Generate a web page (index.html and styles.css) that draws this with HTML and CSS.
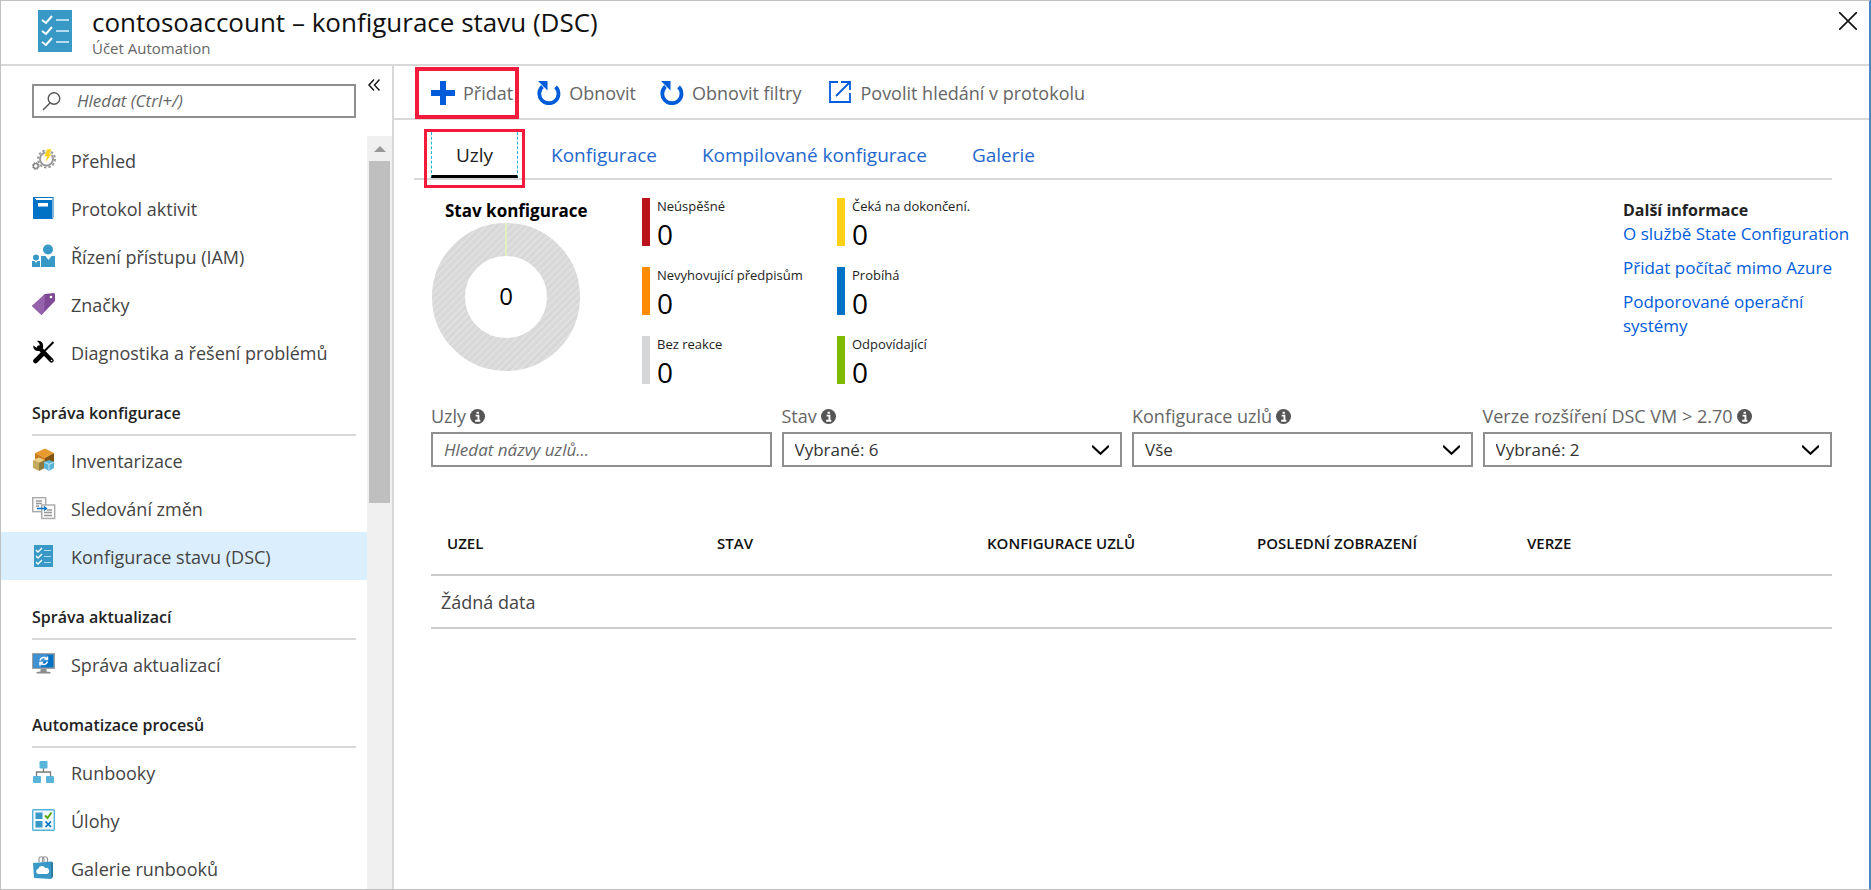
FILE: index.html
```html
<!DOCTYPE html>
<html lang="cs">
<head>
<meta charset="utf-8">
<title>contosoaccount – konfigurace stavu (DSC)</title>
<link rel="stylesheet" href="styles.css">
</head>
<body>
<div class="blade">
  <header class="header">
    <svg class="header-icon" viewBox="0 0 34 42" aria-hidden="true"><rect width="34" height="42" fill="#3999c6"/><g fill="none" stroke="#fff" stroke-width="2"><path d="M4 10l4 3 6-7M4 21l4 3 6-7M4 32l4 3 6-7"/></g><path stroke="#b5dcee" stroke-width="2" d="M18 10h13M18 21h13M18 32h13"/></svg>
    <div class="header-text">
      <h1 class="title">contosoaccount – konfigurace stavu (DSC)</h1>
      <p class="subtitle">Účet Automation</p>
    </div>
    <button class="close" aria-label="Zavřít"><svg width="18" height="18" viewBox="0 0 18 18"><path d="M0 0L18 18M18 0L0 18" stroke="#111" stroke-width="1.6"/></svg></button>
  </header>
  <div class="body">
    <aside class="sidebar">
      <div class="search-row">
        <div class="search">
          <svg width="20" height="20" viewBox="0 0 20 20" aria-hidden="true"><g fill="none" stroke="#555" stroke-width="1.4"><circle cx="12" cy="7.500" r="5.800"/><path d="M8 12L1 19"/></g></svg>
          <input class="search-input" type="text" placeholder="Hledat (Ctrl+/)" aria-label="Hledat">
        </div>
        <button class="collapse" aria-label="Sbalit nabídku"><svg width="12" height="12" viewBox="0 0 12 12"><path d="M6 .5L1 6l5 5.500M11.500 .5L6.500 6l5 5.500" fill="none" stroke="#111" stroke-width="1.4"/></svg></button>
      </div>
      <div class="nav-wrap">
        <nav class="nav">
          <a class="nav-item" href="#"><svg viewBox="0 0 24 24" aria-hidden="true"><circle cx="14.500" cy="11" r="6.500" fill="none" stroke="#9a9a9a" stroke-width="2"/><circle cx="14.500" cy="11" r="8.500" fill="none" stroke="#9a9a9a" stroke-width="2" stroke-dasharray="2.400 2.050"/><circle cx="3.800" cy="18" r="2.400" fill="none" stroke="#888" stroke-width="1.500"/><circle cx="3.800" cy="18" r="3.500" fill="none" stroke="#888" stroke-dasharray="1.400 1.350"/><path d="M15 1h5l-2.500 5H20l-7 9 1.800-6.500H12z" fill="#fcd116" stroke="#fff" stroke-width=".5"/></svg><span>Přehled</span></a>
          <a class="nav-item" href="#"><svg viewBox="0 0 24 24" aria-hidden="true"><path fill="#0072c6" d="M1 1h21v1H4v2h17v19H2a1 1 0 0 1-1-1z"/><path fill="#fff" d="M3 2h17v1H3z"/><path fill="#7fb2dc" d="M20 2l2-1v20l-2 2z"/><rect x="6" y="7" width="10" height="3.500" fill="#fff"/></svg><span>Protokol aktivit</span></a>
          <a class="nav-item" href="#"><svg viewBox="0 0 24 24" aria-hidden="true"><g fill="#3999c6"><circle cx="16" cy="5.500" r="5"/><path d="M9 12h4.500l3 4 3-4H23v11H9z"/><circle cx="4" cy="13.500" r="3"/><path d="M0 17h2.500L4 19l1.500-2H8v6H0z"/></g></svg><span>Řízení přístupu (IAM)</span></a>
          <a class="nav-item" href="#"><svg viewBox="0 0 24 24" aria-hidden="true"><path fill="#804998" d="M0 14L13 2l9-1 1 1v7L9.500 23z"/><path fill="#9463ab" d="M0 14L13 2l-1 18.500L9.500 23z"/><circle cx="19" cy="5" r="1.800" fill="#fff" stroke="#5a2d70" stroke-width=".6"/></svg><span>Značky</span></a>
          <a class="nav-item" href="#"><svg viewBox="0 0 24 24" aria-hidden="true"><path d="M21.500 2L11 12.500" stroke="#000" stroke-width="2"/><path d="M3.500 21L11 13.500" stroke="#000" stroke-width="4.600" stroke-linecap="round"/><path d="M7 7.500L19.500 20.500" stroke="#000" stroke-width="4.400" stroke-linecap="round"/><path d="M5 1c4-1 7 2 6 7L7 11C3 11.500 1 8.500 1.300 5.500L5 8l3-2.500L7 3z"/><circle cx="19.500" cy="20.500" r=".8" fill="#fff"/></svg><span>Diagnostika a řešení problémů</span></a>

          <h2 class="nav-section">Správa konfigurace</h2>
          <a class="nav-item" href="#"><svg viewBox="0 0 24 24" aria-hidden="true"><path fill="#e79b2f" d="M3 5l10-4.500L22 5l-9 5z"/><path fill="#c87a14" d="M3 5l10 5v9L3 14z"/><path fill="#84540d" d="M22 5v10l-9 4v-9z"/><path fill="#e8d088" d="M1 12l6-2.500 6 2.500-6 3z"/><path fill="#c5aa5e" d="M1 12l6 3v8l-6-3z"/><path fill="#8e7b42" d="M13 12v8l-6 3v-8z"/><path fill="#59b4d9" d="M12 14l5-2 5 2v6l-5 3-5-3z"/><path fill="none" stroke="#d4eef8" stroke-width=".9" d="M12.500 14.300l4.500 2 4.500-2M17 16.300v6"/></svg><span>Inventarizace</span></a>
          <a class="nav-item" href="#"><svg viewBox="0 0 24 24" aria-hidden="true"><g fill="#fafafa" stroke="#aaa" stroke-width="1.400"><rect x=".7" y="1.700" width="13" height="14"/><rect x="9.700" y="9" width="13" height="13.500"/></g><path stroke="#999" stroke-width="1.300" d="M4 5h6M4 7.500h6M4 10h3M15 14h5M12 16.500h8M12 19.500h8"/><path d="M5 12.500h9M12 10.500l2.500 2-2.500 2" fill="none" stroke="#0072c6" stroke-width="1.300"/></svg><span>Sledování změn</span></a>
          <a class="nav-item nav-item-active" href="#" aria-current="page"><svg viewBox="0 0 24 24" aria-hidden="true"><rect x="2" y="1" width="19" height="22" fill="#3999c6"/><path fill="none" stroke="#fff" stroke-width="1.300" d="M4 6l2 2 4-4M4 12l2 2 4-4M4 18l2 2 4-4"/><path stroke="#b5dcee" stroke-width="1.200" d="M12 6.500h7M12 12.500h7M12 18.500h7"/></svg><span>Konfigurace stavu (DSC)</span></a>

          <h2 class="nav-section">Správa aktualizací</h2>
          <a class="nav-item" href="#"><svg viewBox="0 0 24 24" aria-hidden="true"><rect y="1" width="23" height="16" fill="#a0a1a2"/><rect x="1.500" y="2.500" width="20" height="13" fill="#0072c6"/><path fill="#3f92d4" d="M1.500 2.500H16l-7 13H1.500z"/><path fill="#8a8b8c" d="M8.500 17h6v2.500l4 .5v1.500h-14V20l4-.5z"/><path fill="none" stroke="#fff" stroke-width="1.500" d="M8 8.500a4 4 0 0 1 7-1.500M15.500 4.500V7.500h-3M15.500 9.500a4 4 0 0 1-7 1.500M8 13.500v-3h3"/></svg><span>Správa aktualizací</span></a>

          <h2 class="nav-section">Automatizace procesů</h2>
          <a class="nav-item" href="#"><svg viewBox="0 0 24 24" aria-hidden="true"><path fill="none" stroke="#7a7a7a" stroke-width="1.300" d="M11.500 8v4M4.500 17v-5h14v5"/><g fill="#59b4d9"><rect x="7.500" y="1" width="8" height="7.500" rx="1"/><rect x="1" y="16" width="8" height="7" rx="1"/><rect x="14" y="16" width="8" height="7" rx="1"/></g></svg><span>Runbooky</span></a>
          <a class="nav-item" href="#"><svg viewBox="0 0 24 24" aria-hidden="true"><rect x=".7" y="1.700" width="21.600" height="20.600" rx="1" fill="#f0f9fd" stroke="#59b4d9" stroke-width="1.400"/><g fill="#3999c6"><rect x="3.500" y="4.500" width="7" height="6.500"/><rect x="3.500" y="13" width="7" height="6.500"/></g><path fill="none" stroke="#57a300" stroke-width="1.800" d="M13 7.500l2.500 2.500 4-5.500"/><path stroke="#0072c6" stroke-width="1.700" d="M13.500 13.500l5.500 5.500M19 13.500L13.500 19"/></svg><span>Úlohy</span></a>
          <a class="nav-item" href="#"><svg viewBox="0 0 24 24" aria-hidden="true"><path fill="none" stroke="#999" stroke-width="1.200" d="M7 6V3c0-3 5-3 5 0v3M10.500 6V3c0-3 5-3 5 0v3"/><path fill="#3999c6" d="M1 7l18-1.500v17.500L2 22z"/><path fill="#2b7ba3" d="M19 5.500l2 1V21l-2 2z"/><path fill="#fff" d="M6 18a2.700 2.700 0 0 1 .3-5.200 3.800 3.800 0 0 1 7-.8 3 3 0 0 1 1.500 6z"/></svg><span>Galerie runbooků</span></a>
        </nav>
        <div class="scrollbar" aria-hidden="true">
          <svg class="scroll-arrow" viewBox="0 0 12 6"><path d="M6 0l6 6H0z" fill="#999"/></svg>
          <div class="scroll-thumb"></div>
        </div>
      </div>
    </aside>

    <main class="main">
      <div class="toolbar">
        <button class="tool tool-marked"><svg viewBox="0 0 24 24" aria-hidden="true"><path d="M9 0h6v9h9v6h-9v9H9v-9H0V9h9z" fill="#015cda"/></svg>Přidat</button>
        <button class="tool"><svg viewBox="0 0 24 24" aria-hidden="true"><path d="M5.500 5.500A9.600 9.600 0 1 0 18.600 5.800" fill="none" stroke="#015cda" stroke-width="3.800"/><path d="M1 0h9.500v9.500z" fill="#015cda"/></svg>Obnovit</button>
        <button class="tool"><svg viewBox="0 0 24 24" aria-hidden="true"><path d="M5.500 5.500A9.600 9.600 0 1 0 18.600 5.800" fill="none" stroke="#015cda" stroke-width="3.800"/><path d="M1 0h9.500v9.500z" fill="#015cda"/></svg>Obnovit filtry</button>
        <button class="tool tool-log"><svg viewBox="0 0 24 24" aria-hidden="true"><path d="M10 1H2v20h20v-9M13 1h9v8M22 1L8 15" fill="none" stroke="#015cda" stroke-width="1.800"/></svg>Povolit hledání v protokolu</button>
      </div>

      <div class="content">
        <div class="tabs" role="tablist">
          <div class="tab-mark"><button class="tab tab-active" role="tab" aria-selected="true">Uzly</button></div>
          <button class="tab" role="tab">Konfigurace</button>
          <button class="tab" role="tab">Kompilované konfigurace</button>
          <button class="tab" role="tab">Galerie</button>
        </div>

        <section class="overview">
          <div class="chart">
            <h2 class="chart-title">Stav konfigurace</h2>
            <svg class="donut" viewBox="0 0 148 148" role="img" aria-label="Stav konfigurace: 0">
              <defs><pattern id="hatch" width="5" height="5" patternUnits="userSpaceOnUse" patternTransform="rotate(45)"><rect width="5" height="5" fill="#d8d8d8"/><rect width="1.300" height="5" fill="#e4e4e4"/></pattern></defs>
              <circle cx="74" cy="74" r="57.500" fill="none" stroke="url(#hatch)" stroke-width="33"/>
              <path d="M74 0v33" stroke="#e4efc4" stroke-width="2"/>
              <text class="donut-value" x="74" y="82" text-anchor="middle">0</text>
            </svg>
          </div>
          <dl class="stats">
            <div class="stat stat-red"><dt>Neúspěšné</dt><dd>0</dd></div>
            <div class="stat stat-yellow"><dt>Čeká na dokončení.</dt><dd>0</dd></div>
            <div class="stat stat-orange"><dt>Nevyhovující předpisům</dt><dd>0</dd></div>
            <div class="stat stat-blue"><dt>Probíhá</dt><dd>0</dd></div>
            <div class="stat stat-gray"><dt>Bez reakce</dt><dd>0</dd></div>
            <div class="stat stat-green"><dt>Odpovídající</dt><dd>0</dd></div>
          </dl>
          <div class="more">
            <h2 class="more-title">Další informace</h2>
            <a href="#">O službě State Configuration</a>
            <a href="#">Přidat počítač mimo Azure</a>
            <a href="#">Podporované operační systémy</a>
          </div>
        </section>

        <section class="filters">
          <div class="field">
            <div class="field-label"><label for="f-nodes">Uzly</label><svg class="info" viewBox="0 0 16 16" aria-hidden="true"><circle cx="8" cy="8" r="8"/><path d="M6 7h3v5M5.500 12.500h5.500M7 4h2.500" stroke="#fff" stroke-width="2" fill="none"/></svg></div>
            <input class="control" id="f-nodes" type="text" placeholder="Hledat názvy uzlů...">
          </div>
          <div class="field">
            <div class="field-label"><label for="f-state">Stav</label><svg class="info" viewBox="0 0 16 16" aria-hidden="true"><circle cx="8" cy="8" r="8"/><path d="M6 7h3v5M5.500 12.500h5.500M7 4h2.500" stroke="#fff" stroke-width="2" fill="none"/></svg></div>
            <div class="select-box"><select class="control" id="f-state"><option>Vybrané: 6</option></select><svg class="chevron" viewBox="0 0 16 9" aria-hidden="true"><path d="M0 .5l8 7.500 8-7.500"/></svg></div>
          </div>
          <div class="field">
            <div class="field-label"><label for="f-config">Konfigurace uzlů</label><svg class="info" viewBox="0 0 16 16" aria-hidden="true"><circle cx="8" cy="8" r="8"/><path d="M6 7h3v5M5.500 12.500h5.500M7 4h2.500" stroke="#fff" stroke-width="2" fill="none"/></svg></div>
            <div class="select-box"><select class="control" id="f-config"><option>Vše</option></select><svg class="chevron" viewBox="0 0 16 9" aria-hidden="true"><path d="M0 .5l8 7.500 8-7.500"/></svg></div>
          </div>
          <div class="field">
            <div class="field-label"><label for="f-version">Verze rozšíření DSC VM &gt; 2.70</label><svg class="info" viewBox="0 0 16 16" aria-hidden="true"><circle cx="8" cy="8" r="8"/><path d="M6 7h3v5M5.500 12.500h5.500M7 4h2.500" stroke="#fff" stroke-width="2" fill="none"/></svg></div>
            <div class="select-box"><select class="control" id="f-version"><option>Vybrané: 2</option></select><svg class="chevron" viewBox="0 0 16 9" aria-hidden="true"><path d="M0 .5l8 7.500 8-7.500"/></svg></div>
          </div>
        </section>

        <table class="nodes">
          <colgroup><col class="col"><col class="col"><col class="col"><col class="col"><col></colgroup>
          <thead><tr><th>UZEL</th><th>STAV</th><th>KONFIGURACE UZLŮ</th><th>POSLEDNÍ ZOBRAZENÍ</th><th>VERZE</th></tr></thead>
          <tbody><tr><td colspan="5">Žádná data</td></tr></tbody>
        </table>
      </div>
    </main>
  </div>
</div>
</body>
</html>
```
FILE: styles.css
```css
* { box-sizing: border-box; }

body {
  margin: 0;
  color: #222;
  font: 18px/24px "Open Sans", "Noto Sans", sans-serif;
}

h1, h2, p, dl, dd { margin: 0; }
button, input, select { font: inherit; color: inherit; }
button { padding: 0; border: 0; background: none; }
a { text-decoration: none; }

.blade {
  display: flex;
  flex-direction: column;
  height: 100vh;
  border: 1px solid #c0c0c0;
  border-right: 2px solid #4f83c8;
  background: #fff;
}

.header {
  display: flex;
  align-items: flex-start;
  gap: 20px;
  padding: 6px 12px 5px 37px;
  border-bottom: 2px solid #d8d8d8;
}
.header-icon { width: 34px; height: 42px; margin-top: 3px; }
.header-text { flex: 1; }
.title { font-size: 26px; line-height: 31px; font-weight: 400; color: #111; }
.subtitle { font-size: 15px; line-height: 21px; color: #666; }
.close { display: flex; margin: 5px 0; }

.body { display: flex; flex: 1; min-height: 0; }

.sidebar {
  display: flex;
  flex-direction: column;
  width: 393px;
  border-right: 2px solid #d8d8d8;
}
.search-row { display: flex; gap: 12px; padding: 13px 10px 18px 31px; }
.search {
  display: flex;
  align-items: center;
  gap: 15px;
  width: 324px;
  height: 34px;
  margin-top: 5px;
  padding: 0 8px;
  border: 2px solid #8f8f8f;
}
.search-input { flex: 1; min-width: 0; padding: 0; border: 0; outline: 0; font-size: 17px; }
.search-input::placeholder, .control::placeholder { color: #666; font-style: italic; opacity: 1; }
.collapse { display: flex; align-self: flex-start; }

.nav-wrap { display: flex; flex: 1; min-height: 0; }
.nav { flex: 1; overflow: hidden; }
.nav-item {
  display: flex;
  align-items: center;
  gap: 15px;
  height: 48px;
  padding-left: 31px;
  color: #444;
}
.nav-item svg { width: 24px; height: 24px; }
.nav-item span { padding-top: 2px; }
.nav-item-active { background: #dbeefe; }
.nav-section {
  height: 60px;
  margin: 0 11px 0 31px;
  padding-top: 25px;
  border-bottom: 2px solid #d8d8d8;
  font-size: 16px;
  font-weight: 600;
}
.scrollbar { width: 25px; padding: 0 2px; background: #f0f0f0; }
.scroll-arrow { display: block; width: 12px; height: 6px; margin: 10px auto 9px; }
.scroll-thumb { height: 342px; background: #bfbfbf; }

.main { flex: 1; min-width: 0; }
.toolbar {
  display: flex;
  gap: 24px;
  padding: 1px 21px 0;
  border-bottom: 2px solid #d8d8d8;
}
.tool {
  display: flex;
  align-items: center;
  gap: 8px;
  height: 51px;
  color: #666;
}
.tool svg { width: 24px; height: 24px; }
.tool-marked {
  height: 52px;
  margin: 0 -6px -1px 0;
  padding: 0 2px 0 12px;
  border: 4px solid #f21b3b;
}
.tool-log { margin-left: 3px; }

.content { padding: 9px 37px 0; }
.tabs {
  display: flex;
  align-items: flex-start;
  height: 51px;
  margin-left: -17px;
  padding-left: 10px;
  border-bottom: 2px solid #d8d8d8;
  font-size: 19px;
}
.tab { height: 49px; padding-top: 2px; color: #2468cc; }
.tab + .tab { margin-left: 45px; }
.tab-mark {
  height: 59px;
  margin-right: 26px;
  padding: 0 4px;
  border: 3px solid #f21b3b;
}
.tab-active {
  width: 87px;
  height: 46px;
  color: #222;
  border: 1px dashed #1fb0e0;
  border-top: 0;
  border-bottom: 3px solid #000;
}

.overview { display: flex; padding-top: 18px; }
.chart { width: 211px; }
.chart-title { padding: 1px 0 0 14px; font-size: 17px; font-weight: 700; color: #000; }
.donut { display: block; width: 148px; height: 148px; margin-left: 1px; }
.donut-value { font-size: 24px; fill: #000; }
.stats {
  display: grid;
  grid-template-columns: 195px 195px;
  gap: 21px 0;
  align-content: start;
}
.stat { height: 48px; padding-left: 7px; border-left: 8px solid; white-space: nowrap; }
.stat dt { font-size: 13px; line-height: 16px; font-weight: 500; color: #222; }
.stat dd { font-size: 28px; line-height: 40px; color: #000; }
.stat-red { border-color: #ba141a; }
.stat-yellow { border-color: #fcd116; }
.stat-orange { border-color: #ff8c00; }
.stat-blue { border-color: #0072c6; }
.stat-gray { border-color: #d6d7d8; }
.stat-green { border-color: #7fba00; }
.more { width: 232px; margin: 0 -23px 0 auto; font-size: 17px; }
.more-title { font-size: 16px; font-weight: 700; }
.more a { display: block; margin-bottom: 10px; color: #015cda; }

.filters {
  display: grid;
  grid-template-columns: 341fr 341fr 341fr 350fr;
  gap: 10px;
  padding-top: 20px;
}
.field-label { display: flex; align-items: center; gap: 4px; padding-bottom: 4px; color: #666; font-size: 18px; }
.info { width: 15px; height: 15px; fill: #555; }
.control {
  display: block;
  width: 100%;
  height: 35px;
  padding: 0 11px;
  border: 2px solid #8f8f8f;
  border-radius: 0;
  background: #fff;
  color: #333;
  font-size: 17px;
  appearance: none;
}
.select-box { position: relative; }
.chevron {
  position: absolute;
  top: 13px;
  right: 13px;
  width: 17px;
  height: 10px;
  fill: none;
  stroke: #000;
  stroke-width: 2;
  pointer-events: none;
}

.nodes { width: 100%; margin-top: 45px; border-collapse: collapse; table-layout: fixed; text-align: left; }
.col { width: 270px; }
.nodes th { height: 63px; padding: 0 0 0 16px; font-size: 15px; font-weight: 600; color: #111; }
.nodes tr { border-bottom: 2px solid #ccc; }
.nodes td { height: 53px; padding: 0 10px; color: #444; }
```
